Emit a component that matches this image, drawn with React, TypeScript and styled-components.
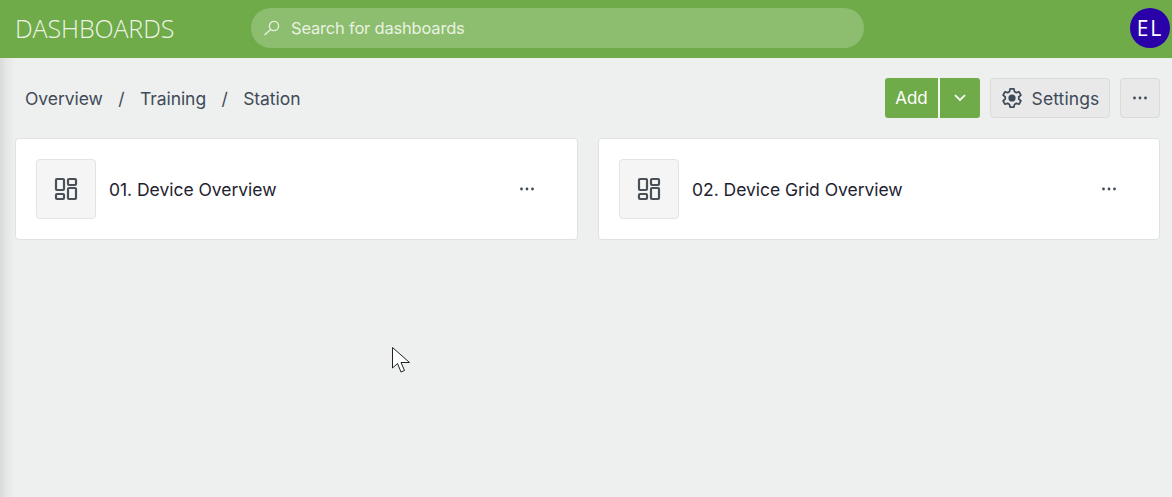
import React from 'react';
import styled, { createGlobalStyle } from 'styled-components';

const GlobalStyle = createGlobalStyle`
    html, body {
        margin: 0;
        padding: 0;
        width: 100%;
        height: 100%;
        overflow: hidden;
    }
    #root {
        height: 100%;
    }
    * {
        box-sizing: border-box;
    }
`

const Page = styled.div`
    position: relative;
    width: 100%;
    height: 100vh;
    display: flex;
    flex-direction: column;
    font-family: Inter, "Liberation Sans", sans-serif;
    background-color: #eef0ef;
`

const TopBar = styled.header`
    height: 58px;
    flex-shrink: 0;
    padding: 0 2px 2px 15px;
    display: flex;
    align-items: center;
    background-color: #6fab48;
`

const BrandTitle = styled.div`
    width: 236px;
    font-family: "Open Sans", sans-serif;
    font-size: 25px;
    font-weight: 300;
    letter-spacing: -0.1px;
    color: #eef3e8;
`

const SearchBox = styled.div`
    width: 613px;
    height: 40px;
    padding-left: 12px;
    display: flex;
    align-items: center;
    gap: 10px;
    border-radius: 20px;
    background-color: #8dbd6f;
    color: #e9f2e2;
    font-size: 16.5px;
    letter-spacing: -0.2px;
`

const Avatar = styled.div`
    width: 40px;
    height: 40px;
    margin-left: auto;
    display: flex;
    align-items: center;
    justify-content: center;
    border-radius: 50%;
    background-color: #2a00a8;
    color: #ffffff;
    font-family: "Open Sans", sans-serif;
    font-size: 21px;
    font-weight: 500;
    letter-spacing: 2px;
`

const Content = styled.main`
    flex: 1;
    padding: 20px 12px 0 15px;
    background: linear-gradient(to right, #d9dad9 0, #e6e8e7 7px, #eef0ef 15px);
`

const Toolbar = styled.div`
    height: 40px;
    display: flex;
    align-items: center;
    justify-content: space-between;
`

const Breadcrumbs = styled.nav`
    padding-left: 10px;
    display: flex;
    align-items: center;
    gap: 15.4px;
    font-size: 17.5px;
    letter-spacing: -0.05px;
    color: #3f4a58;
`

const Actions = styled.div`
    display: flex;
    gap: 10px;
`

const SplitButton = styled.div`
    height: 40px;
    display: flex;
    gap: 2px;
    border-radius: 3px;
    overflow: hidden;
    background-color: #f3f6f0;
`

const GreenPart = styled.div<{ $width: number }>`
    width: ${p => p.$width}px;
    display: flex;
    align-items: center;
    justify-content: center;
    background-color: #6fab48;
    color: #ffffff;
    font-size: 17px;
`

const GreyButton = styled.div<{ $width: number }>`
    width: ${p => p.$width}px;
    height: 40px;
    display: flex;
    align-items: center;
    justify-content: center;
    gap: 9px;
    border: 1px solid #d9dbda;
    border-radius: 4px;
    background-color: #e9e9e9;
    color: #3f4a58;
    font-size: 17.5px;
    letter-spacing: 0.1px;
`

const CardGrid = styled.div`
    margin-top: 20px;
    display: grid;
    grid-template-columns: 563px 562px;
    gap: 20px;
`

const Card = styled.div`
    height: 102px;
    padding: 0 20px;
    display: flex;
    align-items: center;
    border: 1px solid #e0e2e1;
    border-radius: 4px;
    background-color: #ffffff;
`

const IconBox = styled.div`
    width: 60px;
    height: 60px;
    flex-shrink: 0;
    display: flex;
    align-items: center;
    justify-content: center;
    border: 1px solid #e3e3e3;
    border-radius: 4px;
    background-color: #f5f5f5;
`

const CardTitle = styled.div`
    margin-left: 13px;
    font-size: 17.5px;
    letter-spacing: -0.03px;
    color: #1e2230;
`

const CardMenu = styled.div`
    width: 20px;
    margin-left: auto;
    margin-right: 20px;
    display: flex;
    justify-content: center;
`

const Cursor = styled.svg`
    position: absolute;
    left: 392px;
    top: 347px;
`

const SearchIcon = () => (
    <svg width="18" height="18" viewBox="0 0 18 18" fill="none" stroke="#e9f2e2" strokeWidth="1.3">
        <circle cx="11" cy="7" r="4.6" />
        <path d="M7.6 10.4 L1.5 16" />
    </svg>
)

const GridIcon = () => (
    <svg width="24" height="24" viewBox="0 0 24 24" fill="none" stroke="#4a5058" strokeWidth="2.2">
        <rect x="2" y="2" width="8" height="11" rx="1" />
        <rect x="14" y="2" width="8" height="6" rx="1" />
        <rect x="2" y="17" width="8" height="5" rx="1" />
        <rect x="14" y="11" width="8" height="11" rx="1" />
    </svg>
)

const Dots = ({ color }: { color: string }) => (
    <svg width="16" height="4" viewBox="0 0 16 4" fill={color}>
        <circle cx="2.5" cy="2" r="1.4" />
        <circle cx="8" cy="2" r="1.4" />
        <circle cx="13.5" cy="2" r="1.4" />
    </svg>
)

const ChevronIcon = () => (
    <svg width="12" height="8" viewBox="0 0 12 8" fill="none" stroke="#ffffff" strokeWidth="1.8">
        <path d="M1 1.2 L6 6 L11 1.2" />
    </svg>
)

const GearIcon = () => (
    <svg width="22" height="22" viewBox="0 0 24 24" fill="none" stroke="#3f4a58" strokeWidth="1.9" strokeLinejoin="round">
        <path d="M9.9 2h4.2l.6 3 2 1.2 2.9-1 2.1 3.7-2.3 2v2.2l2.3 2-2.1 3.7-2.9-1-2 1.2-.6 3H9.9l-.6-3-2-1.2-2.9 1-2.1-3.7 2.3-2v-2.2l-2.3-2 2.1-3.7 2.9 1 2-1.2z" />
        <circle cx="12" cy="12" r="3" fill="#3f4a58" />
    </svg>
)

const cards = ['01. Device Overview', '02. Device Grid Overview'];

const App = () => {
    return (
        <Page>
            <GlobalStyle />
            <TopBar>
                <BrandTitle>DASHBOARDS</BrandTitle>
                <SearchBox>
                    <SearchIcon />
                    <span>Search for dashboards</span>
                </SearchBox>
                <Avatar>EL</Avatar>
            </TopBar>
            <Content>
                <Toolbar>
                    <Breadcrumbs>
                        <span>Overview</span>
                        <span>/</span>
                        <span>Training</span>
                        <span>/</span>
                        <span>Station</span>
                    </Breadcrumbs>
                    <Actions>
                        <SplitButton>
                            <GreenPart $width={53}>Add</GreenPart>
                            <GreenPart $width={40}><ChevronIcon /></GreenPart>
                        </SplitButton>
                        <GreyButton $width={120}>
                            <GearIcon />
                            <span>Settings</span>
                        </GreyButton>
                        <GreyButton $width={40}>
                            <Dots color="#3f4a58" />
                        </GreyButton>
                    </Actions>
                </Toolbar>
                <CardGrid>
                    {cards.map(title => (
                        <Card key={title}>
                            <IconBox><GridIcon /></IconBox>
                            <CardTitle>{title}</CardTitle>
                            <CardMenu><Dots color="#3f4a58" /></CardMenu>
                        </Card>
                    ))}
                </CardGrid>
            </Content>
            <Cursor width="20" height="28" viewBox="0 0 20 28">
                <path d="M0.5 0.5 L0.5 21 L5.5 16.5 L9 25 L12.5 23.5 L9 15.5 L17.5 15.5 Z" fill="#ffffff" stroke="#222222" strokeWidth="1" />
            </Cursor>
        </Page>
    );
};

export default App;
